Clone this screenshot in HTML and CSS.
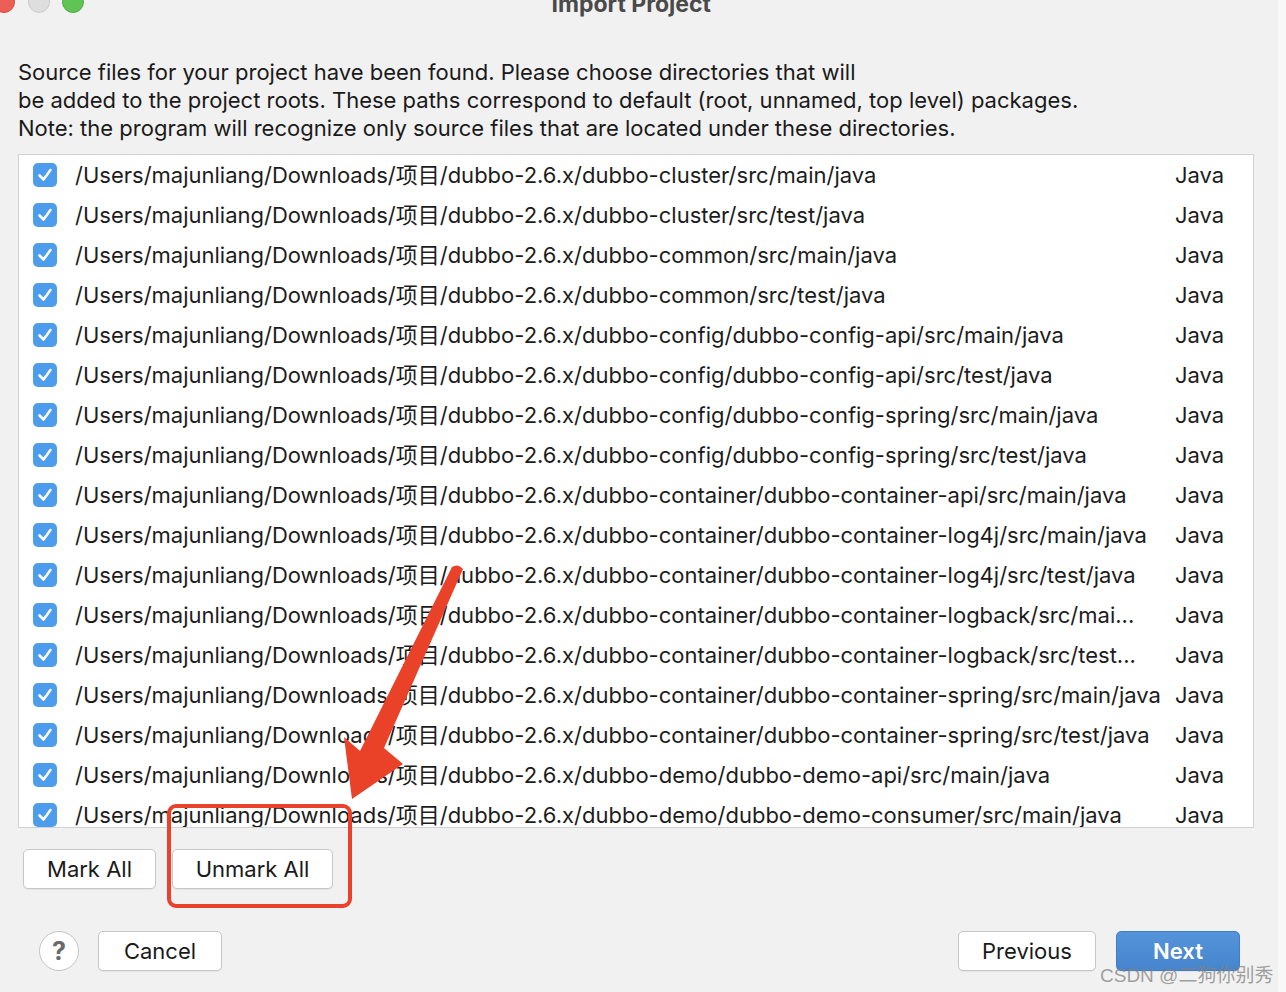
FILE: index.html
```html
<!DOCTYPE html>
<html>
  <head>
    <title>Import Project</title>
    <link rel="stylesheet" href="styles.css">
  </head>
  <body>
    <div class="window">
      <div class="titlebar">
        <span class="light red"></span>
        <span class="light gray"></span>
        <span class="light green"></span>
        <span class="title">Import Project</span>
      </div>

      <p class="intro">
        Source files for your project have been found. Please choose directories that will<br>
        be added to the project roots. These paths correspond to default (root, unnamed, top level) packages.<br>
        Note: the program will recognize only source files that are located under these directories.
      </p>

      <div class="roots">
        <div class="row"><span class="check"></span><span class="path">/Users/majunliang/Downloads/项目/dubbo-2.6.x/dubbo-cluster/src/main/java</span><span class="kind">Java</span></div>
        <div class="row"><span class="check"></span><span class="path">/Users/majunliang/Downloads/项目/dubbo-2.6.x/dubbo-cluster/src/test/java</span><span class="kind">Java</span></div>
        <div class="row"><span class="check"></span><span class="path">/Users/majunliang/Downloads/项目/dubbo-2.6.x/dubbo-common/src/main/java</span><span class="kind">Java</span></div>
        <div class="row"><span class="check"></span><span class="path">/Users/majunliang/Downloads/项目/dubbo-2.6.x/dubbo-common/src/test/java</span><span class="kind">Java</span></div>
        <div class="row"><span class="check"></span><span class="path">/Users/majunliang/Downloads/项目/dubbo-2.6.x/dubbo-config/dubbo-config-api/src/main/java</span><span class="kind">Java</span></div>
        <div class="row"><span class="check"></span><span class="path">/Users/majunliang/Downloads/项目/dubbo-2.6.x/dubbo-config/dubbo-config-api/src/test/java</span><span class="kind">Java</span></div>
        <div class="row"><span class="check"></span><span class="path">/Users/majunliang/Downloads/项目/dubbo-2.6.x/dubbo-config/dubbo-config-spring/src/main/java</span><span class="kind">Java</span></div>
        <div class="row"><span class="check"></span><span class="path">/Users/majunliang/Downloads/项目/dubbo-2.6.x/dubbo-config/dubbo-config-spring/src/test/java</span><span class="kind">Java</span></div>
        <div class="row"><span class="check"></span><span class="path">/Users/majunliang/Downloads/项目/dubbo-2.6.x/dubbo-container/dubbo-container-api/src/main/java</span><span class="kind">Java</span></div>
        <div class="row"><span class="check"></span><span class="path">/Users/majunliang/Downloads/项目/dubbo-2.6.x/dubbo-container/dubbo-container-log4j/src/main/java</span><span class="kind">Java</span></div>
        <div class="row"><span class="check"></span><span class="path">/Users/majunliang/Downloads/项目/dubbo-2.6.x/dubbo-container/dubbo-container-log4j/src/test/java</span><span class="kind">Java</span></div>
        <div class="row"><span class="check"></span><span class="path">/Users/majunliang/Downloads/项目/dubbo-2.6.x/dubbo-container/dubbo-container-logback/src/mai...</span><span class="kind">Java</span></div>
        <div class="row"><span class="check"></span><span class="path">/Users/majunliang/Downloads/项目/dubbo-2.6.x/dubbo-container/dubbo-container-logback/src/test...</span><span class="kind">Java</span></div>
        <div class="row"><span class="check"></span><span class="path">/Users/majunliang/Downloads/项目/dubbo-2.6.x/dubbo-container/dubbo-container-spring/src/main/java</span><span class="kind">Java</span></div>
        <div class="row"><span class="check"></span><span class="path">/Users/majunliang/Downloads/项目/dubbo-2.6.x/dubbo-container/dubbo-container-spring/src/test/java</span><span class="kind">Java</span></div>
        <div class="row"><span class="check"></span><span class="path">/Users/majunliang/Downloads/项目/dubbo-2.6.x/dubbo-demo/dubbo-demo-api/src/main/java</span><span class="kind">Java</span></div>
        <div class="row"><span class="check"></span><span class="path">/Users/majunliang/Downloads/项目/dubbo-2.6.x/dubbo-demo/dubbo-demo-consumer/src/main/java</span><span class="kind">Java</span></div>
      </div>

      <div class="marks">
        <button class="btn mark">Mark All</button>
        <button class="btn unmark">Unmark All</button>
      </div>

      <div class="footer">
        <span class="help">?</span>
        <button class="btn cancel">Cancel</button>
        <span class="spacer"></span>
        <button class="btn previous">Previous</button>
        <button class="btn next">Next</button>
      </div>

      <!-- annotation drawn over the screenshot -->
      <div class="highlight"></div>
      <svg class="arrow" width="140" height="250" viewBox="330 560 140 250">
        <path d="M452 567 Q458 563 463 569 L384 748 L403 764 L352 799 L344 737 L360 751 Z" fill="#ea4129" />
      </svg>
      <span class="watermark">CSDN @二狗你别秀</span>
    </div>
  </body>
</html>
```

FILE: styles.css
```css
body {
  margin: 0;
  width: 1286px;
  height: 992px;
  overflow: hidden;
  background: #f8f8f8;
  font-family: Inter, "Noto Sans CJK SC", sans-serif;
  color: #1c1c1c;
}
.window {
  position: relative;
  width: 1278px;
  height: 992px;
  background: #f1f1f1;
  display: flex;
  flex-direction: column;
}
.titlebar {
  display: flex;
  align-items: center;
  height: 28px;
  margin-top: -12px;
}
.titlebar .light {
  width: 22px;
  height: 22px;
  border-radius: 50%;
  margin-right: 12.5px;
  flex: none;
  box-sizing: border-box;
}
.titlebar .red {
  margin-left: -7px;
  background: #ec5f56;
  border: 1px solid #d9493f;
}
.titlebar .gray {
  background: #dedede;
  border: 1px solid #cbcbcb;
}
.titlebar .green {
  background: #5fc454;
  border: 1px solid #4fae43;
}
.titlebar .title {
  flex: 1;
  text-align: center;
  font-size: 23px;
  font-weight: bold;
  color: #4a4a4a;
  margin: 4px 112px 0 0;
  line-height: 28px;
}
.intro {
  margin: 42px 0 0 18px;
  font-size: 22px;
  line-height: 28px;
  color: #1a1a1a;
  white-space: nowrap;
}
.roots {
  margin: 12px 0 0 18px;
  width: 1236px;
  height: 674px;
  box-sizing: border-box;
  border: 1px solid #d2d2d2;
  background: #ffffff;
  overflow: hidden;
  flex: none;
}
.row {
  display: flex;
  align-items: center;
  height: 40px;
  padding-left: 14px;
  font-size: 22px;
  line-height: 26px;
}
.check {
  flex: none;
  width: 24px;
  height: 24px;
  border-radius: 5px;
  background: #4c9deb
    url("data:image/svg+xml,%3Csvg xmlns='http://www.w3.org/2000/svg' viewBox='0 0 24 24'%3E%3Cpath d='M6.5 12.5 L10.5 16.5 L17.5 7' fill='none' stroke='white' stroke-width='2.6' stroke-linecap='round' stroke-linejoin='round'/%3E%3C/svg%3E")
    center / 24px 24px no-repeat;
  margin-right: 18px;
}
.path {
  flex: 1;
  white-space: nowrap;
  overflow: hidden;
}
.kind {
  flex: none;
  width: 78px;
}
.marks {
  display: flex;
  gap: 16px;
  margin: 21px 0 0 23px;
}
.btn {
  height: 40px;
  box-sizing: border-box;
  border: 1px solid #c7c7c7;
  border-radius: 5px;
  background: #ffffff;
  font-family: inherit;
  font-size: 22px;
  color: #1a1a1a;
  padding: 0;
  box-shadow: 0 1px 1px rgba(0, 0, 0, 0.06);
}
.mark {
  width: 133px;
}
.unmark {
  width: 161px;
}
.footer {
  display: flex;
  align-items: center;
  margin: 42px 38px 0 39px;
}
.help {
  width: 40px;
  height: 40px;
  box-sizing: border-box;
  border-radius: 50%;
  border: 1px solid #c4c4c4;
  background: #ffffff;
  display: flex;
  align-items: center;
  justify-content: center;
  font-size: 25px;
  font-weight: bold;
  color: #6a6a6a;
  margin-right: 19px;
}
.cancel {
  width: 124px;
}
.spacer {
  flex: 1;
}
.previous {
  width: 138px;
  margin-right: 20px;
}
.next {
  width: 124px;
  border-color: #3f7fc6;
  background: linear-gradient(#5594da, #4585cd);
  color: #ffffff;
  font-weight: 600;
}
.highlight {
  position: absolute;
  left: 167px;
  top: 804px;
  width: 185px;
  height: 104px;
  box-sizing: border-box;
  border: 4px solid #e9412b;
  border-radius: 9px;
}
.arrow {
  position: absolute;
  left: 330px;
  top: 560px;
}
.watermark {
  position: absolute;
  left: 1100px;
  top: 960px;
  font-size: 19px;
  color: rgba(130, 130, 130, 0.75);
  white-space: nowrap;
  font-family: "Liberation Sans", "Noto Sans CJK SC", sans-serif;
}
```
